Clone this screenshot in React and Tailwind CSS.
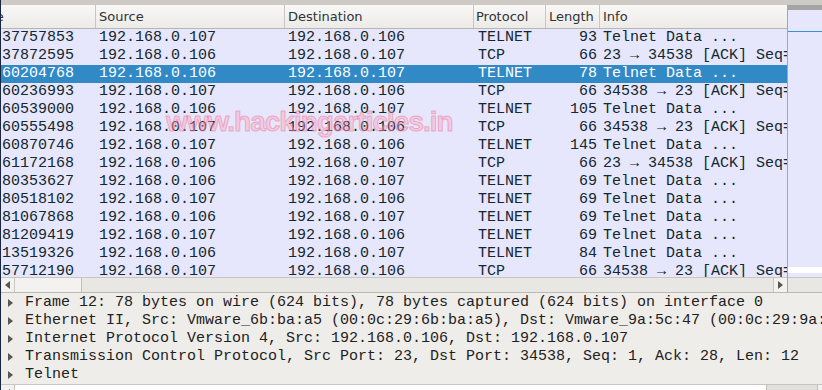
import React from 'react';

const ackA = '23 → 34538 [ACK] Seq=1 Ack=28 Win=29056 Len=0';
const ackB = '34538 → 23 [ACK] Seq=28 Ack=13 Win=29312 Len=0';
const data = 'Telnet Data ...';

const packets = [
    ['37757853', '192.168.0.107', '192.168.0.106', 'TELNET', '93', data],
    ['37872595', '192.168.0.106', '192.168.0.107', 'TCP', '66', ackA],
    ['60204768', '192.168.0.106', '192.168.0.107', 'TELNET', '78', data],
    ['60236993', '192.168.0.107', '192.168.0.106', 'TCP', '66', ackB],
    ['60539000', '192.168.0.106', '192.168.0.107', 'TELNET', '105', data],
    ['60555498', '192.168.0.107', '192.168.0.106', 'TCP', '66', ackB],
    ['60870746', '192.168.0.107', '192.168.0.106', 'TELNET', '145', data],
    ['61172168', '192.168.0.106', '192.168.0.107', 'TCP', '66', ackA],
    ['80353627', '192.168.0.106', '192.168.0.107', 'TELNET', '69', data],
    ['80518102', '192.168.0.107', '192.168.0.106', 'TELNET', '69', data],
    ['81067868', '192.168.0.106', '192.168.0.107', 'TELNET', '69', data],
    ['81209419', '192.168.0.107', '192.168.0.106', 'TELNET', '69', data],
    ['13519326', '192.168.0.106', '192.168.0.107', 'TELNET', '84', data],
    ['57712190', '192.168.0.107', '192.168.0.106', 'TCP', '66', ackB],
];

const details = [
    'Frame 12: 78 bytes on wire (624 bits), 78 bytes captured (624 bits) on interface 0',
    'Ethernet II, Src: Vmware_6b:ba:a5 (00:0c:29:6b:ba:a5), Dst: Vmware_9a:5c:47 (00:0c:29:9a:5c:47)',
    'Internet Protocol Version 4, Src: 192.168.0.106, Dst: 192.168.0.107',
    'Transmission Control Protocol, Src Port: 23, Dst Port: 34538, Seq: 1, Ack: 28, Len: 12',
    'Telnet',
];

const SELECTED = 2;

const Arrow = ({ dir = 'right', className = '' }) => (
    <svg width="5" height="8" viewBox="0 0 5 8" className={className}>
        {dir === 'right'
            ? <polygon points="0,0 5,4 0,8" fill="#555753" />
            : <polygon points="5,0 0,4 5,8" fill="#555753" />}
    </svg>
);

const HeaderCell = ({ w, children }) => (
    <div className={`${w} shrink-0 h-full border-r border-[#c9c6c1] overflow-hidden whitespace-nowrap flex items-center`}>
        {children}
    </div>
);

const PacketRow = ({ p, selected }) => {
    const text = selected ? 'text-white' : 'text-[#12272e]';
    return (
        <div className={`flex h-[18px] leading-[18px] whitespace-nowrap ${selected ? 'bg-[#3189c6]' : 'bg-[#e6e6fc]'} ${text}`}>
            <div className="w-[95px] shrink-0 overflow-hidden pl-[1px]">{p[0]}</div>
            <div className="w-[189px] shrink-0 overflow-hidden pl-[3px]">{p[1]}</div>
            <div className="w-[189px] shrink-0 overflow-hidden pl-[3px]">{p[2]}</div>
            <div className="w-[72px] shrink-0 overflow-hidden pl-[4px]">{p[3]}</div>
            <div className="w-[54px] shrink-0 overflow-hidden pr-[3px] text-right">{p[4]}</div>
            <div className="w-[187px] shrink-0 overflow-hidden pl-[3px]">{p[5]}</div>
        </div>
    );
};

export default function App() {
    return (
        <div className="relative w-[822px] h-[390px] overflow-hidden border-l border-[#1b2640] bg-[#efedea] flex flex-col">
            <div className="h-[5px] shrink-0 bg-[#cecbc6]" />

            <div className="flex h-[287px] shrink-0">
                {/* packet list */}
                <div className="w-[787px] shrink-0 border-r border-[#a9a6a2] flex flex-col">
                    <div className="h-[24px] shrink-0 flex border-b border-[#b9b6b1] bg-gradient-to-b from-[#f9f8f6] to-[#ecebe8] text-[13px] text-[#2e3436] font-['DejaVu_Sans',sans-serif]">
                        <HeaderCell w="w-[95px]"><span className="ml-[-29px]">Time</span></HeaderCell>
                        <HeaderCell w="w-[189px]"><span className="pl-[3px]">Source</span></HeaderCell>
                        <HeaderCell w="w-[189px]"><span className="pl-[3px]">Destination</span></HeaderCell>
                        <HeaderCell w="w-[72px]"><span className="pl-[2px]">Protocol</span></HeaderCell>
                        <HeaderCell w="w-[54px]"><span className="pl-[3px]">Length</span></HeaderCell>
                        <div className="flex-1 flex items-center pl-[3px]">Info</div>
                    </div>
                    <div className="h-[248px] shrink-0 overflow-hidden bg-[#e6e6fc] text-[15px] font-['Liberation_Mono',monospace]">
                        {packets.map((p, i) => (
                            <PacketRow key={i} p={p} selected={i === SELECTED} />
                        ))}
                    </div>
                    <div className="h-[15px] shrink-0 flex bg-[#e9e7e4] border-t border-[#c9c6c1]">
                        <div className="w-[14px] flex items-center justify-center bg-[#f3f2f0] border-r border-[#c9c6c1]">
                            <Arrow dir="left" />
                        </div>
                        <div className="w-[67px] bg-[#f3f2f0] border-r border-[#c2bfba]" />
                        <div className="flex-1" />
                        <div className="w-[14px] flex items-center justify-center bg-[#f3f2f0] border-l border-[#c9c6c1]">
                            <Arrow dir="right" />
                        </div>
                    </div>
                </div>

                {/* minimap */}
                <div className="flex-1 flex flex-col">
                    <div className="h-[5px] shrink-0 bg-[#a5a5a5]" />
                    <div className="h-[21px] shrink-0 bg-[#e6e6fc]" />
                    <div className="h-[1px] shrink-0 bg-[#3a92d4]" />
                    <div className="h-[235px] shrink-0 bg-[#e6e6fc]" />
                    <div className="h-[6px] shrink-0 bg-white" />
                    <div className="h-[4px] shrink-0 bg-[#e6e6fc]" />
                    <div className="flex-1 bg-[#e9e7e4] border-t border-[#c9c6c1]" />
                </div>
            </div>

            {/* packet details */}
            <div className="h-[92px] shrink-0 border-t border-[#bdbab5] pt-[1px] bg-[#efedea] text-[15px] text-[#1e2122] font-['Liberation_Mono',monospace] overflow-hidden">
                {details.map((d, i) => (
                    <div key={i} className="h-[18px] leading-[18px] flex items-center whitespace-nowrap">
                        <div className="w-[24px] shrink-0 flex items-center pl-[7px]">
                            <Arrow />
                        </div>
                        <span>{d}</span>
                    </div>
                ))}
            </div>

            <div className="flex-1 overflow-hidden border-t border-[#c9c6c1]">
                <div className="h-[15px] flex bg-white">
                    <div className="w-[14px] flex items-center justify-center bg-[#f3f2f0] border-r border-[#c9c6c1]">
                        <Arrow dir="left" />
                    </div>
                    <div className="flex-1" />
                    <div className="w-[52px] bg-[#e2e0dd] border-l border-r border-[#c2bfba]" />
                    <div className="w-[4px] flex items-center bg-[#f3f2f0]">
                        <Arrow dir="right" />
                    </div>
                </div>
            </div>

            {/* watermark */}
            <div className="absolute left-[165px] top-[108px] text-[28px] leading-none font-bold tracking-[-1px] font-['Liberation_Sans',sans-serif] text-[rgba(255,160,185,0.4)] [-webkit-text-stroke:1px_rgba(235,120,150,0.5)] pointer-events-none whitespace-nowrap">
                www.hackingarticles.in
            </div>
        </div>
    );
}
